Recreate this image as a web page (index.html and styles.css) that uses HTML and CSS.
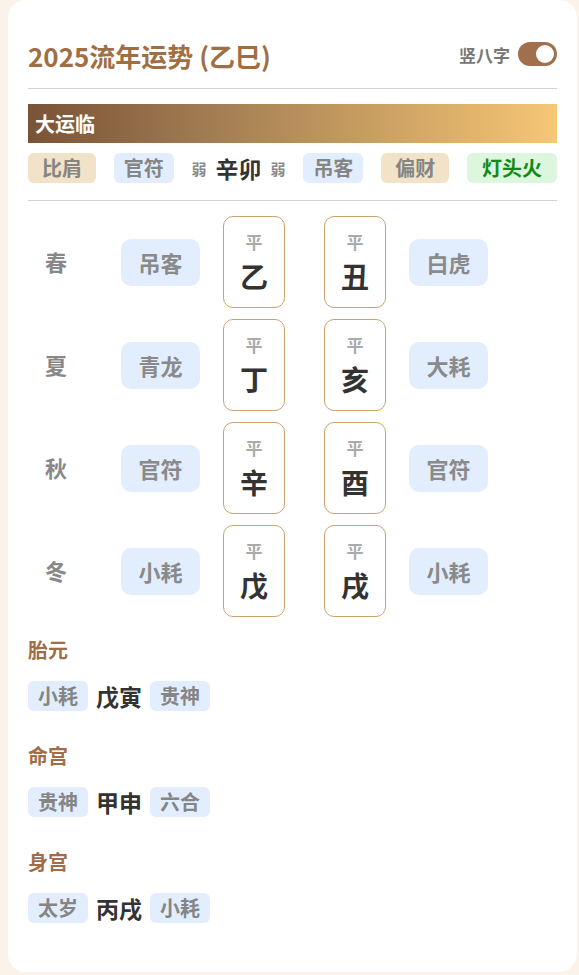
FILE: index.html
```html
<!DOCTYPE html>
<html lang="zh">
<head>
<meta charset="utf-8">
<link rel="stylesheet" href="styles.css">
</head>
<body>
<div class="card">
  <div class="header">
    <h1 class="title">2025流年运势 (乙巳)</h1>
    <div class="switch-wrap">
      <span class="switch-label">竖八字</span>
      <span class="switch"><span class="knob"></span></span>
    </div>
  </div>
  <div class="rule"></div>
  <div class="banner">大运临</div>
  <div class="dayun-row">
    <span class="tag tag-beige">比肩</span>
    <span class="tag tag-blue">官符</span>
    <span class="pillar">
      <span class="weak">弱</span>
      <span class="gz">辛卯</span>
      <span class="weak">弱</span>
    </span>
    <span class="tag tag-blue">吊客</span>
    <span class="tag tag-beige">偏财</span>
    <span class="tag tag-green">灯头火</span>
  </div>
  <div class="rule rule-2"></div>

  <div class="seasons">
    <div class="season-row">
      <span class="season">春</span>
      <span class="stag">吊客</span>
      <div class="gcard"><span class="lvl">平</span><span class="ch">乙</span></div>
      <div class="gcard gcard-2"><span class="lvl">平</span><span class="ch">丑</span></div>
      <span class="stag">白虎</span>
    </div>
    <div class="season-row">
      <span class="season">夏</span>
      <span class="stag">青龙</span>
      <div class="gcard"><span class="lvl">平</span><span class="ch">丁</span></div>
      <div class="gcard gcard-2"><span class="lvl">平</span><span class="ch">亥</span></div>
      <span class="stag">大耗</span>
    </div>
    <div class="season-row">
      <span class="season">秋</span>
      <span class="stag">官符</span>
      <div class="gcard"><span class="lvl">平</span><span class="ch">辛</span></div>
      <div class="gcard gcard-2"><span class="lvl">平</span><span class="ch">酉</span></div>
      <span class="stag">官符</span>
    </div>
    <div class="season-row">
      <span class="season">冬</span>
      <span class="stag">小耗</span>
      <div class="gcard"><span class="lvl">平</span><span class="ch">戊</span></div>
      <div class="gcard gcard-2"><span class="lvl">平</span><span class="ch">戌</span></div>
      <span class="stag">小耗</span>
    </div>
  </div>

  <div class="section">
    <div class="sec-title">胎元</div>
    <div class="sec-row">
      <span class="tag tag-blue">小耗</span>
      <span class="sec-gz">戊寅</span>
      <span class="tag tag-blue">贵神</span>
    </div>
  </div>
  <div class="section">
    <div class="sec-title">命宫</div>
    <div class="sec-row">
      <span class="tag tag-blue">贵神</span>
      <span class="sec-gz">甲申</span>
      <span class="tag tag-blue">六合</span>
    </div>
  </div>
  <div class="section">
    <div class="sec-title">身宫</div>
    <div class="sec-row">
      <span class="tag tag-blue">太岁</span>
      <span class="sec-gz">丙戌</span>
      <span class="tag tag-blue">小耗</span>
    </div>
  </div>
</div>
</body>
</html>
```
FILE: styles.css
```css
* { box-sizing: border-box; }

body {
  margin: 0;
  background: #fbf3ea;
  font-family: "Noto Sans CJK SC", "Noto Sans", sans-serif;
}

.card {
  margin: 0 2px 0 8px;
  background: #ffffff;
  border-radius: 18px;
  padding: 38px 20px 47px 20px;
  min-height: 970px;
}

.header {
  display: flex;
  justify-content: space-between;
  align-items: center;
  height: 36px;
}

.title {
  margin: 0;
  font-size: 26px;
  line-height: 36px;
  font-weight: 700;
  color: #a06e44;
}

.switch-wrap {
  display: flex;
  align-items: center;
  gap: 8px;
  margin-top: -4px;
}

.switch-label {
  font-size: 17px;
  font-weight: 700;
  color: #777777;
}

.switch {
  width: 39px;
  height: 24px;
  border-radius: 12px;
  background: #a0704d;
  display: flex;
  align-items: center;
  justify-content: flex-end;
  padding-right: 3px;
}

.knob {
  width: 18px;
  height: 18px;
  border-radius: 50%;
  background: #ffffff;
}

.rule {
  height: 1px;
  background: #d2d2d2;
  margin-top: 14px;
}

.rule-2 {
  margin-top: 17px;
}

.banner {
  margin-top: 15px;
  height: 39px;
  line-height: 39px;
  padding-left: 7px;
  font-size: 20px;
  font-weight: 700;
  color: #ffffff;
  background: linear-gradient(90deg, #795336 0%, #a98356 40%, #d6a966 75%, #f6c775 100%);
}

.dayun-row {
  margin-top: 10px;
  display: flex;
  justify-content: space-between;
  align-items: center;
  height: 30px;
}

.tag {
  display: inline-flex;
  align-items: center;
  justify-content: center;
  height: 30px;
  padding: 0 10px;
  border-radius: 6px;
  font-size: 20px;
  line-height: 30px;
  font-weight: 700;
  color: #858585;
}

.tag-blue { background: #e2eefd; }

.tag-beige {
  background: #f2e3c8;
  padding: 0 14px;
}

.tag-green {
  background: #ddf7df;
  color: #128a14;
  padding: 0 15px;
}

.pillar {
  display: flex;
  align-items: center;
  gap: 9px;
}

.weak {
  font-size: 15px;
  font-weight: 700;
  color: #8a8a8a;
}

.gz {
  font-size: 23px;
  font-weight: 700;
  color: #333333;
}

.seasons {
  margin-top: 15px;
  display: flex;
  flex-direction: column;
  gap: 11px;
}

.season-row {
  display: flex;
  align-items: center;
  height: 92px;
}

.season {
  width: 56px;
  text-align: center;
  font-size: 22px;
  line-height: 28px;
  margin-top: -3px;
  font-weight: 700;
  color: #888888;
}

.stag {
  display: flex;
  align-items: center;
  justify-content: center;
  width: 79px;
  height: 47px;
  border-radius: 10px;
  background: #e2eefd;
  font-size: 22px;
  font-weight: 700;
  color: #8a8a8a;
}

.season + .stag { margin-left: 37px; }

.gcard {
  width: 62px;
  height: 92px;
  border: 1px solid #c9a46f;
  border-radius: 10px;
  margin-left: 23px;
  display: flex;
  flex-direction: column;
  align-items: center;
  padding-top: 14px;
}

.gcard-2 {
  margin-left: 39px;
  margin-right: 23px;
}

.lvl {
  font-size: 17px;
  line-height: 22px;
  font-weight: 700;
  color: #aaaaaa;
}

.ch {
  margin-top: 5px;
  font-size: 28px;
  line-height: 36px;
  font-weight: 700;
  color: #333333;
}

.section { margin-top: 29px; }

.seasons + .section { margin-top: 19px; }

.sec-title {
  font-size: 20px;
  line-height: 28px;
  font-weight: 700;
  color: #a06d48;
}

.sec-row {
  margin-top: 15px;
  display: flex;
  align-items: center;
  gap: 8px;
}

.sec-gz {
  font-size: 23px;
  font-weight: 700;
  color: #333333;
}
```
